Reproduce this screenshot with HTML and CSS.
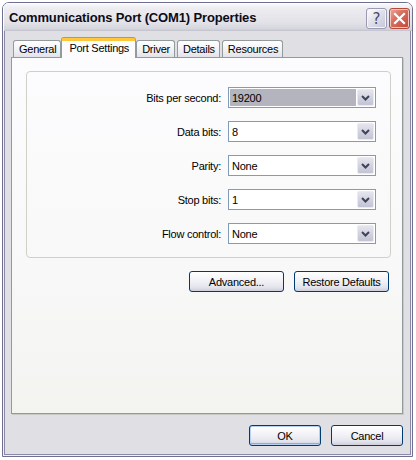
FILE: index.html
```html
<!DOCTYPE html>
<html>
<head>
<meta charset="utf-8">
<link rel="stylesheet" href="styles.css">
</head>
<body>
<div class="window">
  <div class="titlebar">
    <span class="title">Communications Port (COM1) Properties</span>
    <div class="caption-buttons">
      <div class="cap-btn help">?</div>
      <div class="cap-btn close">
        <svg width="13" height="13" viewBox="0 0 13 13"><path d="M2 2 L11 11 M11 2 L2 11" stroke="#fff" stroke-width="2.2" stroke-linecap="square"/></svg>
      </div>
    </div>
  </div>
  <div class="client">
    <div class="tabs">
      <div class="tab">General</div>
      <div class="tab selected">Port Settings</div>
      <div class="tab">Driver</div>
      <div class="tab">Details</div>
      <div class="tab">Resources</div>
    </div>
    <div class="panel">
      <div class="group">
        <label class="label">Bits per second:</label>
        <div class="combo"><span class="value highlight">19200</span><span class="drop"><svg width="9" height="6" viewBox="0 0 9 6"><path d="M1 1 L4.5 4.5 L8 1" fill="none" stroke="#3e4358" stroke-width="2"/></svg></span></div>
        <label class="label">Data bits:</label>
        <div class="combo"><span class="value">8</span><span class="drop"><svg width="9" height="6" viewBox="0 0 9 6"><path d="M1 1 L4.5 4.5 L8 1" fill="none" stroke="#3e4358" stroke-width="2"/></svg></span></div>
        <label class="label">Parity:</label>
        <div class="combo"><span class="value">None</span><span class="drop"><svg width="9" height="6" viewBox="0 0 9 6"><path d="M1 1 L4.5 4.5 L8 1" fill="none" stroke="#3e4358" stroke-width="2"/></svg></span></div>
        <label class="label">Stop bits:</label>
        <div class="combo"><span class="value">1</span><span class="drop"><svg width="9" height="6" viewBox="0 0 9 6"><path d="M1 1 L4.5 4.5 L8 1" fill="none" stroke="#3e4358" stroke-width="2"/></svg></span></div>
        <label class="label">Flow control:</label>
        <div class="combo"><span class="value">None</span><span class="drop"><svg width="9" height="6" viewBox="0 0 9 6"><path d="M1 1 L4.5 4.5 L8 1" fill="none" stroke="#3e4358" stroke-width="2"/></svg></span></div>
      </div>
      <div class="panel-buttons">
        <button class="btn wide">Advanced...</button>
        <button class="btn wide">Restore Defaults</button>
      </div>
    </div>
    <div class="dialog-buttons">
      <button class="btn default">OK</button>
      <button class="btn">Cancel</button>
    </div>
  </div>
</div>
</body>
</html>
```
FILE: styles.css
```css
html, body {
  margin: 0;
  padding: 0;
  background: #ffffff;
}
body {
  font-family: "Liberation Sans", Arial, sans-serif;
  font-size: 11px;
  letter-spacing: -0.25px;
  color: #000;
}
.window {
  margin: 2px 0 0 2px;
  width: 411px;
  height: 455px;
  box-sizing: border-box;
  border: 1px solid #6f6f92;
  border-radius: 7px 7px 0 0;
  display: flex;
  flex-direction: column;
  overflow: hidden;
}
.titlebar {
  height: 28px;
  flex: none;
  display: flex;
  align-items: center;
  justify-content: space-between;
  padding: 0 2px 0 6px;
  background: linear-gradient(#fbfbfd 0%, #ececf1 20%, #e2e2e8 70%, #d6d6de 92%, #c2c2cc 100%);
  box-shadow: inset 1px 1px 0 #ffffff;
}
.title {
  font-weight: bold;
  font-size: 13px;
  letter-spacing: -0.15px;
  color: #0c0c16;
  padding-top: 1px;
}
.caption-buttons {
  display: flex;
  gap: 2px;
  padding-top: 3px;
}
.cap-btn {
  width: 21px;
  height: 21px;
  box-sizing: border-box;
  border-radius: 3px;
  display: flex;
  align-items: center;
  justify-content: center;
}
.help {
  border: 1px solid #9a9ab2;
  background: linear-gradient(135deg, #ffffff 0%, #e4e4ee 40%, #c4c4d6 100%);
  box-shadow: inset 0 0 0 1px #f6f6fa;
  color: #4a4a64;
  font-family: "DejaVu Sans", sans-serif;
  font-size: 15px;
  font-weight: normal;
  letter-spacing: 0;
}
.close {
  border: 1px solid #b44a3c;
  background: linear-gradient(135deg, #f0a898 0%, #d8705e 40%, #c0473a 100%);
  box-shadow: inset 0 0 0 1px #f4c8c0;
}
.client {
  flex: 1;
  display: flex;
  flex-direction: column;
  background: #e0dfe3;
  border: 1px solid #f2f2f6;
  border-top: none;
  box-shadow: inset 1px 0 #8a8aa8, inset -1px 0 #8a8aa8, inset 0 -1px #8a8aa8;
  padding: 6px 8px 8px 7px;
}
.tabs {
  display: flex;
  align-items: flex-end;
  gap: 2px;
  padding-left: 2px;
  height: 20px;
  flex: none;
}
.tab {
  height: 17px;
  box-sizing: border-box;
  padding: 1px 4px 0 5px;
  border: 1px solid #919b9c;
  border-bottom: none;
  border-radius: 3px 3px 0 0;
  background: linear-gradient(#ffffff, #f0f0f4 60%, #e2e2ea);
  display: flex;
  align-items: center;
  line-height: 1;
}
.tab.selected {
  height: 20px;
  margin: 0 -2px -1px -2px;
  padding: 0 6px 2px 7px;
  background: #fcfcfe;
  border-top: 3px solid #ffc73c;
  box-shadow: 0 -1px 0 #e68b2c;
  position: relative;
  z-index: 2;
}
.panel {
  height: 357px;
  flex: none;
  box-sizing: border-box;
  border: 1px solid #919b9c;
  background: linear-gradient(#fcfcfe, #f8f8f8 60%, #f3f3f0);
  box-shadow: 1px 1px 0 #c9c9c4;
  display: flex;
  flex-direction: column;
  position: relative;
  z-index: 1;
}
.group {
  margin: 13px 11px 0 14px;
  height: 187px;
  box-sizing: border-box;
  border: 1px solid #d0d0c8;
  border-radius: 4px;
  padding: 15px 14px 0 0;
  display: grid;
  grid-template-columns: 1fr 148px;
  grid-auto-rows: 21px;
  column-gap: 7px;
  row-gap: 13px;
}
.label {
  display: flex;
  align-items: center;
  justify-content: flex-end;
}
.combo {
  box-sizing: border-box;
  height: 21px;
  border: 1px solid #7f9db9;
  background: #fff;
  display: flex;
  align-items: stretch;
  padding: 1px;
}
.value {
  flex: 1;
  display: flex;
  align-items: center;
  padding-left: 2px;
  margin-right: 1px;
}
.value.highlight {
  background: #b3b4be;
}
.drop {
  width: 17px;
  box-sizing: border-box;
  border: 1px solid #eaeaf2;
  border-radius: 2px;
  background: linear-gradient(#e4e5ee, #cfd0de 60%, #c2c3d5);
  display: flex;
  align-items: center;
  justify-content: center;
}
.panel-buttons {
  display: flex;
  justify-content: flex-end;
  gap: 10px;
  margin: 13px 13px 0 0;
}
.dialog-buttons {
  display: flex;
  justify-content: flex-end;
  gap: 10px;
  margin-top: 11px;
}
.btn {
  font-family: "Liberation Sans", Arial, sans-serif;
  font-size: 11px;
  letter-spacing: -0.25px;
  color: #000;
  width: 72px;
  height: 21px;
  box-sizing: border-box;
  border: 1px solid #003c74;
  border-radius: 3px;
  background: linear-gradient(#ffffff 0%, #f4f4f8 40%, #e4e4ec 80%, #cfcfdc 100%);
  padding: 0;
  margin: 0;
}
.btn.wide {
  width: 95px;
}
.btn.default {
  box-shadow: inset 0 0 0 1px #b8d0f4, inset 0 -1px 0 1px #8cacdc;
}
```
